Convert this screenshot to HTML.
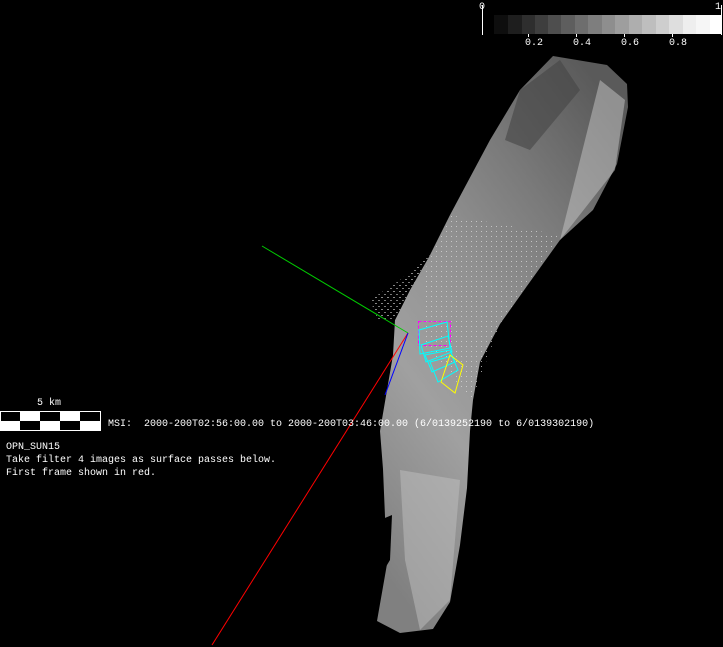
<!DOCTYPE html>
<html><head><style>
html,body{margin:0;padding:0;background:#000;width:723px;height:647px;overflow:hidden;position:relative}
.t{position:absolute;color:#fff;font-family:"Liberation Mono",monospace;font-size:10px;line-height:13px;white-space:pre}
</style></head><body>
<svg width="723" height="647" style="position:absolute;left:0;top:0">
<defs>
<linearGradient id="g" x1="0.8" y1="0" x2="0.2" y2="1">
<stop offset="0" stop-color="#5a5a5a"/>
<stop offset="0.25" stop-color="#7a7a7a"/>
<stop offset="0.45" stop-color="#909090"/>
<stop offset="0.7" stop-color="#a0a0a0"/>
<stop offset="1" stop-color="#808080"/>
</linearGradient>
<pattern id="d" width="5" height="5" patternUnits="userSpaceOnUse"><rect x="1" y="1" width="1" height="1" fill="#ddd"/></pattern>
<pattern id="d2" width="6" height="6" patternUnits="userSpaceOnUse"><rect width="6" height="6" fill="#000"/><rect x="0" y="0" width="2" height="1" fill="#777"/><rect x="3" y="3" width="2" height="1" fill="#888"/></pattern>
</defs>
<polygon fill="url(#g)" points="553,56 607,65 627,84 628,107 617,164 593,210 560,240 527,286 500,324 480,362 473,400 470,431 467,488 460,545 450,602 433,629 400,633 377,621 387,564 383,469 380,431 393,355 395,320 410,290 430,255 450,215 490,140 520,90"/>
<polygon fill="url(#d2)" points="378,320 395,320 410,290 430,255 400,280 370,300"/>
<polygon fill="url(#d)" opacity="0.7" points="450,215 560,235 500,324 472,400 425,345 425,270"/>
<polygon fill="#c8c8c8" opacity="0.5" points="600,80 625,100 615,170 560,240 580,160"/>
<polygon fill="#c0c0c0" opacity="0.5" points="400,470 460,480 450,600 420,630 405,560"/>
<polygon fill="#444" opacity="0.6" points="520,90 560,60 580,90 530,150 505,140"/>
<polygon fill="#000" points="380,520 392,515 390,560 378,580"/>
<line x1="262" y1="246" x2="408" y2="333" stroke="#0c0" stroke-width="1"/>
<line x1="212" y1="645" x2="408" y2="333" stroke="#f00" stroke-width="1"/>
<line x1="385" y1="395" x2="408" y2="333" stroke="#00f" stroke-width="1"/>
<rect x="418.5" y="321.5" width="32" height="24" fill="none" stroke="#f0f" stroke-dasharray="3,2"/>
<polygon points="419,330 447,322 450,348 420,354" fill="none" stroke="#0ff"/>
<polygon points="421,345 448,336 452,352 426,362" fill="none" stroke="#0ff"/>
<polygon points="425,355 450,350 455,362 432,372" fill="none" stroke="#0ff"/>
<polygon points="430,362 452,356 458,370 438,382" fill="none" stroke="#0ff"/>
<polygon points="450,355 463,365 455,393 441,382" fill="none" stroke="#ff0"/>
<line x1="482.5" y1="5" x2="482.5" y2="35" stroke="#fff"/>
<line x1="721.5" y1="5" x2="721.5" y2="35" stroke="#fff"/>
<g>
<rect x="494" y="15" width="14" height="19" fill="#0e0e0e"/><rect x="508" y="15" width="14" height="19" fill="#1e1e1e"/><rect x="522" y="15" width="13" height="19" fill="#2e2e2e"/><rect x="535" y="15" width="13" height="19" fill="#3e3e3e"/><rect x="548" y="15" width="13" height="19" fill="#4e4e4e"/><rect x="561" y="15" width="14" height="19" fill="#5e5e5e"/><rect x="575" y="15" width="13" height="19" fill="#6e6e6e"/><rect x="588" y="15" width="14" height="19" fill="#7e7e7e"/><rect x="602" y="15" width="13" height="19" fill="#8e8e8e"/><rect x="615" y="15" width="14" height="19" fill="#9e9e9e"/><rect x="629" y="15" width="13" height="19" fill="#aeaeae"/><rect x="642" y="15" width="14" height="19" fill="#bebebe"/><rect x="656" y="15" width="13" height="19" fill="#cecece"/><rect x="669" y="15" width="14" height="19" fill="#dedede"/><rect x="683" y="15" width="13" height="19" fill="#eeeeee"/><rect x="696" y="15" width="14" height="19" fill="#f6f6f6"/><rect x="710" y="15" width="12" height="19" fill="#fff"/>
</g>
<line x1="528.5" y1="34" x2="528.5" y2="37" stroke="#fff"/><line x1="576.5" y1="34" x2="576.5" y2="37" stroke="#fff"/><line x1="624.5" y1="34" x2="624.5" y2="37" stroke="#fff"/><line x1="672.5" y1="34" x2="672.5" y2="37" stroke="#fff"/>
<rect x="0.5" y="411.5" width="100" height="19" fill="#000" stroke="#fff"/>
<rect x="0" y="421" width="20" height="10" fill="#fff"/><rect x="20" y="412" width="20" height="9" fill="#fff"/><rect x="40" y="421" width="20" height="10" fill="#fff"/><rect x="60" y="412" width="20" height="9" fill="#fff"/><rect x="80" y="421" width="20" height="10" fill="#fff"/>
</svg>
<div class="t" style="left:479px;top:1px">0</div>
<div class="t" style="left:715px;top:1px">1</div>
<div class="t" style="left:525px;top:37px">0.2</div>
<div class="t" style="left:573px;top:37px">0.4</div>
<div class="t" style="left:621px;top:37px">0.6</div>
<div class="t" style="left:669px;top:37px">0.8</div>
<div class="t" style="left:37px;top:397px">5 km</div>
<div class="t" style="left:108px;top:418px">MSI:  2000-200T02:56:00.00 to 2000-200T03:46:00.00 (6/0139252190 to 6/0139302190)</div>
<div class="t" style="left:6px;top:441px">OPN_SUN15
Take filter 4 images as surface passes below.
First frame shown in red.</div>
</body></html>
